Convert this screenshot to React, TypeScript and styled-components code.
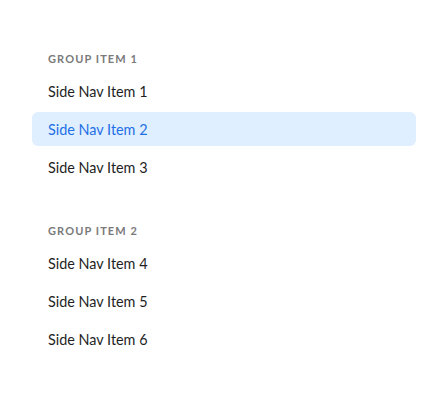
import React from "react";
import styled, { createGlobalStyle } from "styled-components";

const GlobalStyle = createGlobalStyle`
  html, body {
    margin: 0;
    padding: 0;
    background: #ffffff;
  }
  body {
    font-family: "Lato", "Noto Sans", sans-serif;
  }
`;

const groups = [
  { title: "Group Item 1", items: ["Side Nav Item 1", "Side Nav Item 2", "Side Nav Item 3"] },
  { title: "Group Item 2", items: ["Side Nav Item 4", "Side Nav Item 5", "Side Nav Item 6"] },
];

const active = "Side Nav Item 2";

const App = () => {
  return (
    <>
      <GlobalStyle />
      <Nav>
        {groups.map((group) => (
          <Group key={group.title}>
            <GroupTitle>{group.title}</GroupTitle>
            {group.items.map((item) => (
              <NavItem key={item} active={item === active}>
                {item}
              </NavItem>
            ))}
          </Group>
        ))}
      </Nav>
    </>
  );
};

export default App;

const Nav = styled.nav`
  display: flex;
  flex-direction: column;
  gap: 34px;
  width: 448px;
  padding: 46px 32px 0;
  box-sizing: border-box;
`;

const Group = styled.div`
  display: flex;
  flex-direction: column;
  gap: 4px;
`;

const GroupTitle = styled.div`
  height: 24px;
  display: flex;
  align-items: center;
  padding: 0 16px;
  font-size: 11px;
  font-weight: 700;
  letter-spacing: 1.1px;
  text-transform: uppercase;
  color: #7a7a7a;
`;

const NavItem = styled.div<{ active?: boolean }>`
  height: 34px;
  display: flex;
  align-items: center;
  padding: 0 16px;
  border-radius: 6px;
  font-size: 14.4px;
  color: ${(p) => (p.active ? "#1f6fe5" : "#1f1f1f")};
  background: ${(p) => (p.active ? "#dfefff" : "transparent")};
  cursor: pointer;
`;
